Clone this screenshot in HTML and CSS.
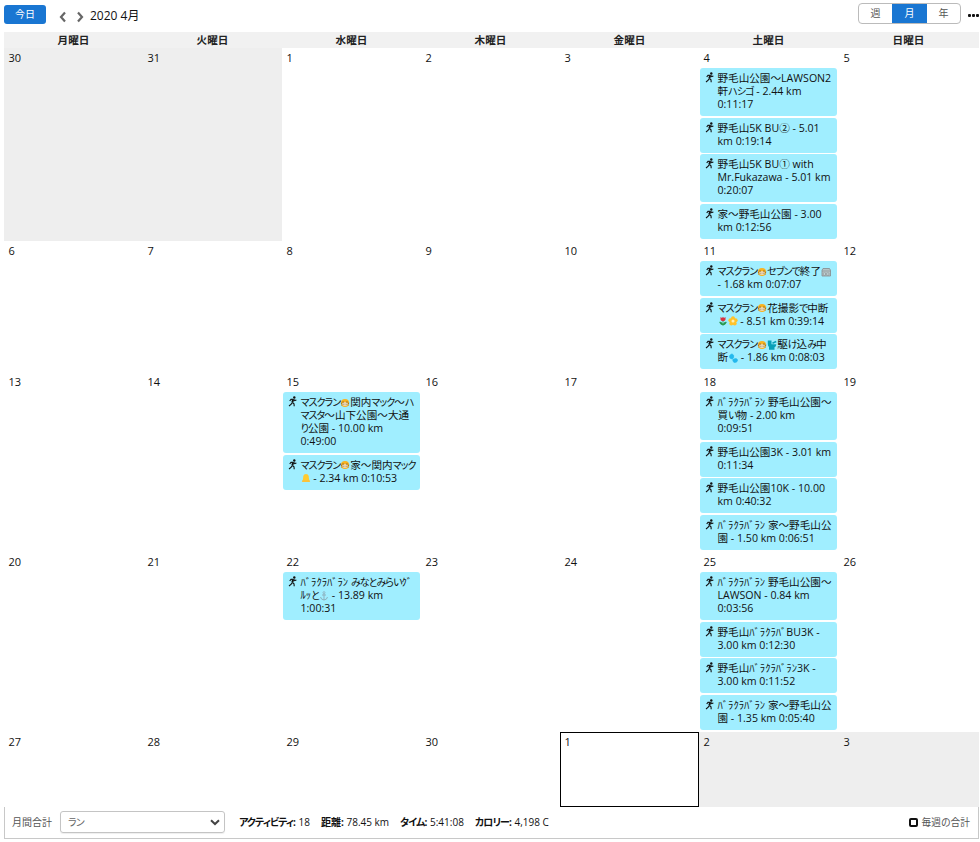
FILE: index.html
```html
<!DOCTYPE html>
<html lang="ja">
  <head>
    <meta charset="UTF-8" />
    <meta name="viewport" content="width=device-width, initial-scale=1.0" />
    <title>カレンダー</title>
    <link rel="stylesheet" href="styles.css">
  </head>
  <body>
    <svg class="sprite" width="0" height="0">
      <symbol id="run" viewBox="0 0 9 11">
        <circle cx="6.3" cy="1.5" r="1.2" fill="#111" />
        <path d="M5.3 3.2 L4.3 6.3" stroke="#111" stroke-width="2" />
        <path d="M4.3 6.3 L6 7.8 L6.2 10.3 M4.2 6.4 L3.2 8.2 L1 10 M5.2 3.3 L3 3.4 L1.7 5 M5.7 3.4 L6.7 4.6 L8.4 4" fill="none" stroke="#111" stroke-width="1.1" />
      </symbol>
      <symbol id="mask" viewBox="0 0 10 10">
        <circle cx="5" cy="5" r="4.1" fill="#f9b320" />
        <path d="M2.2 4.9 L5 4.1 L7.8 4.9 V7 Q5 9 2.2 7Z" fill="#ead7b8" />
        <path d="M2.2 4h1.7M6.1 4h1.7M3.5 6.3h.7M5.8 6.3h.7M.8 5l1.4.6M9.2 5l-1.4.6M1.4 7.2l1-.4M8.6 7.2l-1-.4" stroke="#77572c" stroke-width=".8" />
      </symbol>
      <symbol id="store" viewBox="0 0 10 10">
        <path d="M1 3.2 L2 1.5 H8.5 L9.5 3.2 V9 H1Z" fill="#b7c4c6" stroke="#85898b" stroke-width=".8" />
        <path d="M1 4h8.5M2.3 6h2.2v2H2.3zM5.7 6h2.2v2H5.7z" fill="#d8eef2" stroke="#85898b" stroke-width=".6" />
      </symbol>
      <symbol id="tulip" viewBox="0 0 10 10">
        <path d="M2.5 1 L4 2 L5 .7 L6 2 L7.5 1 V3.7 Q5 7 2.5 3.7Z" fill="#d83140" />
        <path d="M5 5v4.5M5 9Q2 8.7 1.7 6Q4.3 6 5 9Q5.7 6 8.3 6Q8 8.7 5 9" fill="#25964b" stroke="#25964b" stroke-width=".7" />
      </symbol>
      <symbol id="blossom" viewBox="0 0 10 10">
        <g fill="#ffc229"><circle cx="5" cy="2.3" r="2" /><circle cx="7.6" cy="4.3" r="2" /><circle cx="6.7" cy="7.4" r="2" /><circle cx="3.3" cy="7.4" r="2" /><circle cx="2.4" cy="4.3" r="2" /></g>
        <circle cx="5" cy="5" r="1.5" fill="#fff0b0" />
      </symbol>
      <symbol id="toilet" viewBox="0 0 10 10">
        <path d="M.8 .5 H4.5 V4.2 H9.3 Q9.3 6.5 7.5 7.2 V9.7 H2 V7 Q.8 6 .8 4Z" fill="#08a0b8" />
        <path d="M5.5 3.3 L9.2 1.5" stroke="#08a0b8" stroke-width="1.6" />
      </symbol>
      <symbol id="splash" viewBox="0 0 10 10">
        <path d="M1.5 3 Q3.5 -.5 5.6 2.2 Q6.5 5.3 4 6 Q1 5.8 1.5 3M5 6.5Q8.8 4.2 9.7 7.2Q9 10 6.2 9.5Q4.2 8.5 5 6.5M3 5L6 7" fill="#24b8ed" stroke="#24b8ed" stroke-width=".6" />
      </symbol>
      <symbol id="bell" viewBox="0 0 10 10">
        <path d="M.7 9 Q2.1 8 2.3 3 Q2.8 1 5 1 Q7.2 1 7.7 3 Q7.9 8 9.3 9Z" fill="#ffcb32" />
        <path d="M1 8h8" stroke="#f5b942" />
      </symbol>
      <symbol id="anchor" viewBox="0 0 10 10">
        <circle cx="5" cy="1.6" r="1" fill="none" stroke="#8db0bd" stroke-width=".8" />
        <path d="M5 2.5V9M3 4h4M1.5 6Q2 8.7 5 9Q8 8.7 8.5 6" fill="none" stroke="#8db0bd" />
      </symbol>
    </svg>

    <div class="toolbar">
      <button class="today">今日</button>
      <svg class="arrows" viewBox="0 0 28 12"><path d="M7 1.5 L3 6 L7 10.5 M20 1.5 L24 6 L20 10.5" /></svg>
      <span class="month">2020 4月</span>
      <div class="views">
        <span>週</span><span class="active">月</span><span>年</span>
      </div>
      <div class="more"><i></i><i></i><i></i></div>
    </div>

    <div class="weekdays">
      <div>月曜日</div><div>火曜日</div><div>水曜日</div><div>木曜日</div><div>金曜日</div><div>土曜日</div><div>日曜日</div>
    </div>

    <div class="calendar">
      <div class="day other">30</div>
      <div class="day other">31</div>
      <div class="day">1</div>
      <div class="day">2</div>
      <div class="day">3</div>
      <div class="day">4
        <div class="event"><svg class="run"><use href="#run" /></svg>野毛山公園～LAWSON2<br>軒<span class="kana">ハシゴ</span> - 2.44 km<br>0:11:17</div>
        <div class="event"><svg class="run"><use href="#run" /></svg>野毛山5K BU② - 5.01<br>km 0:19:14</div>
        <div class="event"><svg class="run"><use href="#run" /></svg>野毛山5K BU① with<br>Mr.Fukazawa - 5.01 km<br>0:20:07</div>
        <div class="event"><svg class="run"><use href="#run" /></svg>家～野毛山公園 - 3.00<br>km 0:12:56</div>
      </div>
      <div class="day sunday">5</div>

      <div class="day">6</div>
      <div class="day">7</div>
      <div class="day">8</div>
      <div class="day">9</div>
      <div class="day">10</div>
      <div class="day">11
        <div class="event"><svg class="run"><use href="#run" /></svg><span class="kana">マスクラン</span><svg class="emoji"><use href="#mask" /></svg><span class="kana">セブンで</span>終了<svg class="emoji"><use href="#store" /></svg><br>- 1.68 km 0:07:07</div>
        <div class="event"><svg class="run"><use href="#run" /></svg><span class="kana">マスクラン</span><svg class="emoji"><use href="#mask" /></svg>花撮影<span class="kana">で</span>中断<br><svg class="emoji"><use href="#tulip" /></svg><svg class="emoji"><use href="#blossom" /></svg> - 8.51 km 0:39:14</div>
        <div class="event"><svg class="run"><use href="#run" /></svg><span class="kana">マスクラン</span><svg class="emoji"><use href="#mask" /></svg><svg class="emoji"><use href="#toilet" /></svg>駆<span class="kana">け</span>込<span class="kana">み</span>中<br>断<svg class="emoji"><use href="#splash" /></svg> - 1.86 km 0:08:03</div>
      </div>
      <div class="day sunday">12</div>

      <div class="day">13</div>
      <div class="day">14</div>
      <div class="day">15
        <div class="event"><svg class="run"><use href="#run" /></svg><span class="kana">マスクラン</span><svg class="emoji"><use href="#mask" /></svg>関内<span class="kana">マック</span>～<span class="kana">ハ</span><br><span class="kana">マスタ</span>～山下公園～大通<br><span class="kana">り</span>公園 - 10.00 km<br>0:49:00</div>
        <div class="event"><svg class="run"><use href="#run" /></svg><span class="kana">マスクラン</span><svg class="emoji"><use href="#mask" /></svg>家～関内<span class="kana">マック</span><br><svg class="emoji"><use href="#bell" /></svg> - 2.34 km 0:10:53</div>
      </div>
      <div class="day">16</div>
      <div class="day">17</div>
      <div class="day">18
        <div class="event"><svg class="run"><use href="#run" /></svg><span class="half">ﾊﾞﾗｸﾗﾊﾞﾗﾝ</span> 野毛山公園～<br>買<span class="kana">い</span>物 - 2.00 km<br>0:09:51</div>
        <div class="event"><svg class="run"><use href="#run" /></svg>野毛山公園3K - 3.01 km<br>0:11:34</div>
        <div class="event"><svg class="run"><use href="#run" /></svg>野毛山公園10K - 10.00<br>km 0:40:32</div>
        <div class="event"><svg class="run"><use href="#run" /></svg><span class="half">ﾊﾞﾗｸﾗﾊﾞﾗﾝ</span> 家～野毛山公<br>園 - 1.50 km 0:06:51</div>
      </div>
      <div class="day sunday">19</div>

      <div class="day">20</div>
      <div class="day">21</div>
      <div class="day">22
        <div class="event"><svg class="run"><use href="#run" /></svg><span class="half">ﾊﾞﾗｸﾗﾊﾞﾗﾝ</span> <span class="kana">みなとみらい</span><span class="half">ｸﾞ</span><br><span class="half">ﾙｯ</span><span class="kana">と</span><svg class="emoji"><use href="#anchor" /></svg> - 13.89 km<br>1:00:31</div>
      </div>
      <div class="day">23</div>
      <div class="day">24</div>
      <div class="day">25
        <div class="event"><svg class="run"><use href="#run" /></svg><span class="half">ﾊﾞﾗｸﾗﾊﾞﾗﾝ</span> 野毛山公園～<br>LAWSON - 0.84 km<br>0:03:56</div>
        <div class="event"><svg class="run"><use href="#run" /></svg>野毛山<span class="half">ﾊﾞﾗｸﾗﾊﾞ</span>BU3K -<br>3.00 km 0:12:30</div>
        <div class="event"><svg class="run"><use href="#run" /></svg>野毛山<span class="half">ﾊﾞﾗｸﾗﾊﾞﾗﾝ</span>3K -<br>3.00 km 0:11:52</div>
        <div class="event"><svg class="run"><use href="#run" /></svg><span class="half">ﾊﾞﾗｸﾗﾊﾞﾗﾝ</span> 家～野毛山公<br>園 - 1.35 km 0:05:40</div>
      </div>
      <div class="day sunday">26</div>

      <div class="day">27</div>
      <div class="day">28</div>
      <div class="day">29</div>
      <div class="day">30</div>
      <div class="day current">1</div>
      <div class="day other">2</div>
      <div class="day other sunday">3</div>
    </div>

    <div class="summary">
      <span class="label">月間合計</span>
      <div class="select"><span class="kana">ラン</span><svg viewBox="0 0 10 7"><path d="M1 1.2 L5 5 L9 1.2" /></svg></div>
      <div class="totals">
        <span><b class="kana">アクティビティ:</b> 18</span>
        <span><b>距離:</b> 78.45 km</span>
        <span><b class="kana">タイム:</b> 5:41:08</span>
        <span><b class="kana">カロリー:</b> 4,198 C</span>
      </div>
      <label class="weekly"><i></i>毎週の合計</label>
    </div>
  </body>
</html>
```
FILE: styles.css
```css
* {
  box-sizing: border-box;
}
body {
  margin: 0;
  padding: 0 1px 0 4px;
  height: 842px;
  overflow: hidden;
  background: #fff;
  color: #111;
  font-family: "Open Sans", "Noto Sans CJK JP", sans-serif;
  font-size: 11px;
  line-height: 13px;
}
.sprite {
  position: absolute;
}
.toolbar {
  display: flex;
  height: 32px;
  align-items: flex-start;
}
.today {
  width: 42px;
  height: 19px;
  margin: 5px 12px 0 0;
  padding: 0;
  border: 0;
  border-radius: 3px;
  background: #1976d2;
  color: #fff;
  font: inherit;
  font-size: 10px;
}
.arrows {
  width: 28px;
  height: 12px;
  margin-top: 11px;
}
.arrows path {
  fill: none;
  stroke: #666;
  stroke-width: 2.2;
}
.month {
  margin: 7px 0 0 4px;
  font-size: 12px;
  line-height: 17px;
}
.views {
  display: flex;
  width: 103px;
  height: 21px;
  margin: 3px 7px 0 auto;
  border: 1px solid #bbb;
  border-radius: 4px;
  overflow: hidden;
  color: #555;
  font-size: 10px;
  line-height: 19px;
  text-align: center;
}
.views span {
  flex: 1;
}
.views .active {
  flex: 0 0 35px;
  background: #1976d2;
  color: #fff;
}
.more {
  display: flex;
  gap: 1px;
  width: 11px;
  margin-top: 14px;
}
.more i {
  width: 3px;
  height: 3px;
  border-radius: 1px;
  background: #111;
}
.weekdays {
  display: grid;
  grid-template-columns: repeat(6, 139px) 1fr;
  height: 16px;
  background: #f1f1f1;
  color: #222;
  font-size: 10.6px;
  font-weight: bold;
  line-height: 16px;
  text-align: center;
}
.calendar {
  display: grid;
  grid-template-columns: repeat(6, 139px) 1fr;
  grid-template-rows: 193px 131px 180px 180px 75px;
}
.day {
  padding: 3px 1.5px 0 4.5px;
  line-height: 13px;
}
.day.sunday {
  padding-left: 5.5px;
}
.day.other {
  background: #eee;
}
.day.current {
  padding: 2px 1px 0 3.5px;
  border: 1px solid #000;
}
.event {
  position: relative;
  margin: 0 0 1.5px -3.5px;
  padding: 4px 0 5px 17.5px;
  border-radius: 3px;
  background: #a0eeff;
  font-size: 10.6px;
  white-space: nowrap;
}
.event:first-child {
  margin-top: 4px;
}
.run {
  position: absolute;
  top: 4px;
  left: 5px;
  width: 9px;
  height: 11px;
}
.emoji {
  width: 10px;
  height: 10px;
  margin: -2px 0;
  vertical-align: 0.5px;
}
.kana {
  font-size: 10px;
  font-feature-settings: "palt";
  letter-spacing: -0.95px;
  line-height: 0;
}
.half {
  letter-spacing: 0;
  line-height: 0;
}
.summary {
  display: flex;
  align-items: center;
  height: 32px;
  padding: 0 8px 1px 7px;
  border: 1px solid #c8c8c8;
  border-top: 0;
}
.label,
.weekly {
  color: #555;
  font-size: 10px;
}
.select {
  display: flex;
  align-items: center;
  justify-content: space-between;
  width: 165px;
  height: 22px;
  margin: 0 14px 0 8px;
  padding: 0 4px 0 7px;
  border: 1px solid #c4c4c4;
  border-radius: 3px;
  box-shadow: 0 1px 1px #eee;
  color: #666;
}
.select svg {
  width: 10px;
  height: 7px;
}
.select path {
  fill: none;
  stroke: #444;
  stroke-width: 2;
}
.totals {
  display: flex;
  gap: 11px;
  font-size: 10px;
}
.totals .kana {
  letter-spacing: -0.9px;
  margin-right: 1px;
}
.weekly {
  display: flex;
  align-items: center;
  gap: 4px;
  margin-left: auto;
  font-size: 9.7px;
}
.weekly i {
  width: 9px;
  height: 9px;
  border: 2px solid #111;
  border-radius: 2px;
}
```
